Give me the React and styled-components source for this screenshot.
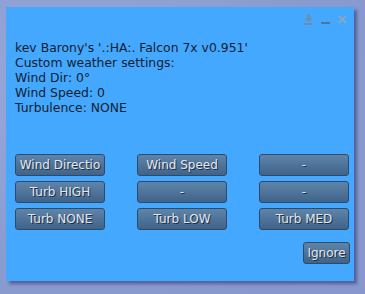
import React from 'react'
import styled, { createGlobalStyle } from 'styled-components'

const GlobalStyle = createGlobalStyle`
  html, body {
    margin: 0;
    padding: 0;
    width: 365px;
    height: 294px;
    overflow: hidden;
    background: #8d9fd3;
    font-family: "DejaVu Sans", "Liberation Sans", sans-serif;
  }
`

const Desktop = styled.div`
  width: 365px;
  height: 294px;
  padding: 7px 0 0 6px;
  box-sizing: border-box;
  background: radial-gradient(ellipse at 20% 30%, #98a8da 0%, #8a9bd0 60%, #8797cd 100%);
`

const Floater = styled.div`
  width: 348px;
  height: 274px;
  background: #44a8fe;
  box-shadow: 3px 3px 3px rgba(40, 50, 110, 0.55);
  display: flex;
  flex-direction: column;
  box-sizing: border-box;
`

const TitleBar = styled.div`
  height: 24px;
  display: flex;
  justify-content: flex-end;
  align-items: center;
  gap: 6px;
  padding: 0 6px 0 0;
`

const TitleIcon = styled.svg`
  width: 11px;
  height: 12px;
`

const Message = styled.div`
  padding: 9px 0 0 9px;
  font-size: 12.4px;
  line-height: 15px;
  color: #15202e;
`

const ButtonGrid = styled.div`
  display: grid;
  grid-template-columns: repeat(3, 90px);
  column-gap: 32px;
  row-gap: 5px;
  padding: 39px 0 0 9px;
`

const Button = styled.button`
  height: 22px;
  width: ${p => p.$w || '90px'};
  padding: 0 3px;
  border: 1px solid #2c4a6c;
  border-radius: 3px;
  background: linear-gradient(#5f84aa, #3f6389);
  color: #e4e8ee;
  font-family: "DejaVu Sans", sans-serif;
  font-size: 12px;
  text-shadow: 1px 1px 0 #1d2c40;
  white-space: nowrap;
  overflow: hidden;
  text-align: center;
  box-sizing: border-box;
`

const Footer = styled.div`
  display: flex;
  justify-content: flex-end;
  padding: 12px 4px 0 0;
`

const labels = [
  'Wind Directio', 'Wind Speed', '-',
  'Turb HIGH', '-', '-',
  'Turb NONE', 'Turb LOW', 'Turb MED',
]

function App() {
  return (
    <>
      <GlobalStyle />
      <Desktop>
        <Floater>
          <TitleBar>
            <TitleIcon viewBox="0 0 11 12">
              <rect x="4" y="1" width="3" height="5" fill="#6a8fb0" />
              <path d="M1.5 5 L9.5 5 L5.5 9 Z" fill="#6a8fb0" />
              <rect x="1" y="10" width="9" height="2" fill="#6a8fb0" />
            </TitleIcon>
            <TitleIcon viewBox="0 0 11 12">
              <rect x="1" y="9" width="9" height="2" fill="#4d76a0" />
            </TitleIcon>
            <TitleIcon viewBox="0 0 11 12">
              <path d="M2 3 L9 10 M9 3 L2 10" stroke="#86a8c4" strokeWidth="1.8" />
            </TitleIcon>
          </TitleBar>
          <Message>
            kev Barony's '.:HA:. Falcon 7x v0.951'<br />
            Custom weather settings:<br />
            Wind Dir: 0°<br />
            Wind Speed: 0<br />
            Turbulence: NONE
          </Message>
          <ButtonGrid>
            {labels.map((label, i) => (
              <Button key={i}>{label}</Button>
            ))}
          </ButtonGrid>
          <Footer>
            <Button $w="47px">Ignore</Button>
          </Footer>
        </Floater>
      </Desktop>
    </>
  )
}

export default App
